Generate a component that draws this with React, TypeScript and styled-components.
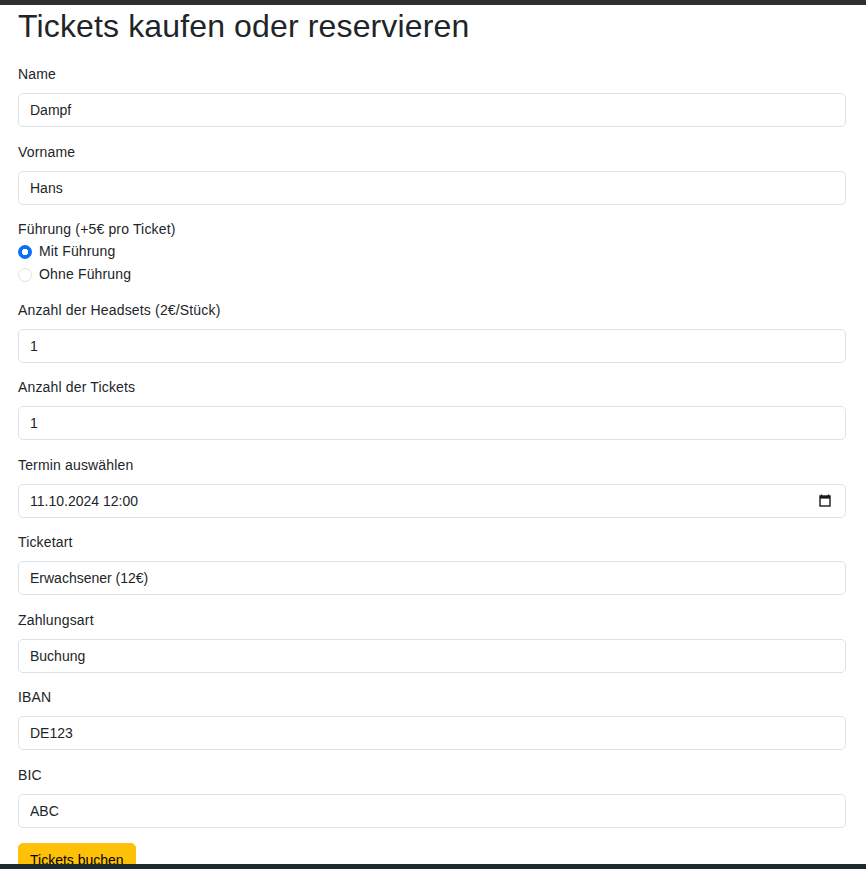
import styled, { createGlobalStyle } from 'styled-components'

const GlobalStyle = createGlobalStyle`
    body {
        margin: 0;
        font-family: 'Liberation Sans', Arial, sans-serif;
        font-size: 14px;
        line-height: 1.5;
        letter-spacing: 0.16px;
        color: #212529;
        background: #fff;
    }
    * {
        box-sizing: border-box;
    }
`

const Bar = styled.div<{ $bottom?: boolean }>`
    position: fixed;
    left: 0;
    right: 0;
    height: 5px;
    z-index: 10;
    ${(p) => (p.$bottom ? 'bottom: 0; background: #1d2a2e;' : 'top: 0; background: #303030;')}
`

const Container = styled.main`
    padding: 7px 20px 40px 18px;
`

const Title = styled.h1`
    margin: 0 0 19px;
    font-size: 32px;
    font-weight: 400;
    line-height: 1.2;
    letter-spacing: 0.14px;
`

const Field = styled.div`
    margin-bottom: 14.5px;
`

const Label = styled.label<{ $plain?: boolean }>`
    display: block;
    line-height: 21px;
    margin-bottom: ${(p) => (p.$plain ? '1px' : '8px')};
`

const InputWrap = styled.div`
    position: relative;
`

const Input = styled.input`
    display: block;
    width: 100%;
    height: 34px;
    padding: 5.5px 11px;
    font: inherit;
    color: #212529;
    background: #fff;
    border: 1px solid #dee2e6;
    border-radius: 5px;
    outline: none;
`

const CalendarIcon = styled.svg`
    position: absolute;
    right: 15px;
    top: 10px;
    width: 12px;
    height: 13px;
    pointer-events: none;
`

const Check = styled.div`
    display: flex;
    align-items: center;
    min-height: 21px;
    margin-bottom: 2px;
    gap: 7px;
`

const Radio = styled.input`
    appearance: none;
    width: 14px;
    height: 14px;
    margin: 0;
    border: 1px solid #dee2e6;
    border-radius: 50%;
    background: #fff;
    &:checked {
        border-color: #0d6efd;
        background: radial-gradient(circle, #fff 0 3px, #0d6efd 3.5px);
    }
`

const SubmitButton = styled.button`
    margin-top: 1px;
    padding: 5.5px 11px;
    font: inherit;
    color: #000;
    background: #ffc107;
    border: 1px solid #ffc107;
    border-radius: 5px;
`

const fields = [
    { label: 'Name', value: 'Dampf' },
    { label: 'Vorname', value: 'Hans' },
]

const moreFields = [
    { label: 'Ticketart', value: 'Erwachsener (12€)' },
    { label: 'Zahlungsart', value: 'Buchung' },
    { label: 'IBAN', value: 'DE123' },
    { label: 'BIC', value: 'ABC' },
]

const TextField = ({ label, value }: { label: string; value: string }) => (
    <Field>
        <Label>{label}</Label>
        <Input defaultValue={value} />
    </Field>
)

const App = () => {
    return (
        <>
            <GlobalStyle />
            <Bar />
            <Container>
                <Title>Tickets kaufen oder reservieren</Title>
                <form onSubmit={(e) => e.preventDefault()}>
                    {fields.map((f) => (
                        <TextField key={f.label} label={f.label} value={f.value} />
                    ))}
                    <Field>
                        <Label $plain>Führung (+5€ pro Ticket)</Label>
                        <Check>
                            <Radio type="radio" name="fuehrung" id="mit" defaultChecked />
                            <label htmlFor="mit">Mit Führung</label>
                        </Check>
                        <Check>
                            <Radio type="radio" name="fuehrung" id="ohne" />
                            <label htmlFor="ohne">Ohne Führung</label>
                        </Check>
                    </Field>
                    <TextField label="Anzahl der Headsets (2€/Stück)" value="1" />
                    <TextField label="Anzahl der Tickets" value="1" />
                    <Field>
                        <Label>Termin auswählen</Label>
                        <InputWrap>
                            <Input defaultValue="11.10.2024 12:00" />
                            <CalendarIcon viewBox="0 0 12 13">
                                <path d="M2.5 0.5v2M9.5 0.5v2" stroke="#1a1a1a" strokeWidth="1.4" />
                                <rect x="1" y="2" width="10" height="10" fill="none" stroke="#1a1a1a" strokeWidth="1.4" />
                                <rect x="1" y="2" width="10" height="2.6" fill="#1a1a1a" />
                            </CalendarIcon>
                        </InputWrap>
                    </Field>
                    {moreFields.map((f) => (
                        <TextField key={f.label} label={f.label} value={f.value} />
                    ))}
                    <SubmitButton type="submit">Tickets buchen</SubmitButton>
                </form>
            </Container>
            <Bar $bottom />
        </>
    )
}

export default App
